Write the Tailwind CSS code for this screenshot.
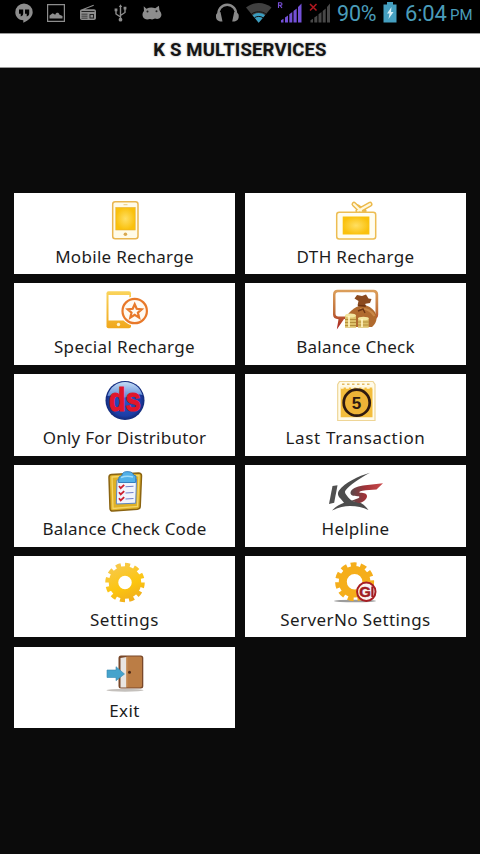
<!DOCTYPE html>
<html lang="en">
  <head>
    <meta charset="utf-8" />
    <meta name="viewport" content="width=device-width, initial-scale=1.0" />
    <title>K S Multiservices</title>
    <script src="https://cdn.jsdelivr.net/npm/@tailwindcss/browser@4"></script>
  </head>

  <body class="bg-[#0b0b0b] font-['Noto_Sans',sans-serif] text-[#1c1c1c]">
    <div class="h-[854px] w-[480px] overflow-hidden">
      <!-- status bar -->
      <div class="flex h-[33px] items-start bg-black">
        <svg class="h-[33px] w-[330px] shrink-0" viewBox="0 0 330 33">
          <g fill="#8d8d8d">
            <path d="M24 3.5a8.7 8.7 0 0 0-8.7 8.7c0 4.6 3.6 8 8 8v2.6c5.500-2.700 9.400-6.300 9.400-10.600A8.700 8.700 0 0 0 24 3.500z" />
            <path fill="#000" d="M19 9.500h4.200v4c0 1.500-1 2.500-2.500 3v-2.700H19zM25 9.500h4.200v4c0 1.500-1 2.500-2.500 3v-2.700H25z" />
            <path d="M47 4h18v18H47zM48.200 5.200v15.600h15.600V5.200z" fill-rule="evenodd" />
            <path d="M49.500 18.500v-3l3.200-2.300 2.500 1.500c1-2.500 3.500-2.500 4.300 0l3 1.300v2.500z" />
            <path d="M82 9.200l11.500-4.500.4 1L85 9.200h9c1.200 0 2 .8 2 2V18c0 1.200-.8 2-2 2H82c-1.200 0-2-.8-2-2v-6.800c0-1.200.8-2 2-2z" />
            <path d="M81.500 11h13v1h-13zM81.500 13.700h6v.8h-6zM81.500 15.700h6v.8h-6zM81.500 17.700h6v.8h-6zM89.500 14h4.500v4.500h-4.500z" fill="#222" />
            <path d="M90.500 15h2.500v2.500h-2.500z" />
            <path d="M143.700 6.200l2.700 2.600c3-1.500 6-1.500 8.800-.5l3.700-2.500.6 4.500c2.400 3 2.400 5.500 1 7-1 1.700-3.500 2-5.500 1.300-1.500 1-3.500 1-5 .4-3 1-6 .3-7-1.900-1-2.500-.5-4.500 1-6z" />
            <circle cx="147.500" cy="11.500" r="1" fill="#222" />
            <circle cx="156.500" cy="11.200" r="1" fill="#222" />
          </g>
          <g fill="none" stroke="#8d8d8d" stroke-width="1.400">
            <path d="M120.500 6v13M120.500 17l-4.500-3v-3.500M120.500 15.500l4.500-3V9" />
            <circle cx="120.500" cy="19.700" r="1.200" fill="#8d8d8d" />
            <path d="M118.800 7l1.700-2.700L122.200 7z" fill="#8d8d8d" stroke="none" />
            <path d="M114.600 8.500h2.800v2.700h-2.800zM123.600 6.800h2.800v2.700h-2.800z" fill="#8d8d8d" stroke="none" />
          </g>
          <!-- headphones -->
          <path d="M218.500 16c-1-6 3-11.300 8.700-11.300S237 10 236 16" fill="none" stroke="#8a8a8a" stroke-width="2.400" />
          <path d="M216 15c0-1.500 2.500-2.800 4.500-3l2 9.500c-3.500.5-6.500-1.500-6.500-4.500zM238.700 15c0-1.500-2.500-2.800-4.500-3l-2 9.500c3.500.5 6.500-1.500 6.500-4.500z" fill="#8a8a8a" />
          <!-- wifi -->
          <path d="M258.700 22.700L246 7.500c7-6 18.400-6 25.500 0z" fill="#404040" />
          <path d="M258.700 22.700l-6.200-7.500c3.500-2.800 9-2.800 12.500 0z" fill="#3a9dc0" />
          <path d="M251.500 14c4-3 10.400-3 14.500 0M254.500 17.700c2.500-1.700 6-1.700 8.500 0" fill="none" stroke="#111" stroke-width="1" />
          <!-- sim signals -->
          <path d="M278.500 8V2.700h2.200c1.700 0 1.700 2.600 0 2.600h-2.200 1.500L282 8" fill="none" stroke="#7a50d8" stroke-width="1.100" />
          <path d="M281 22.500v-2.300l2.500-1.500v3.800zM285 22.500v-5l3-2v7zM289.300 22.500v-8.300l3-2.200v10.500zM293.500 22.500V11l3.200-2.500v14zM298 22.500V7l3.500-3.500v19z" fill="#7350d8" />
          <path d="M310.500 22.500v-2.300l2.500-1.500v3.800zM314.300 22.500v-5l3-2v7zM318.500 22.500v-8.300l3-2.200v10.500zM322.700 22.500V11l3-2.500v14zM327 22.500V7l3-3.500v19z" fill="#484848" />
          <path d="M310 4l6.500 6.500M316.500 4l-6.500 6.500" stroke="#b31820" stroke-width="1.500" />
        </svg>
        <div class="relative w-[150px] font-[Roboto,sans-serif] text-[#4a9cba]">
          <span class="absolute top-[1px] left-[7px] text-[21.500px] leading-[26px] tracking-[-0.2px]">90%</span>
          <svg class="absolute top-[2px] left-[52px] h-[22px] w-[16px]" viewBox="0 0 16 22">
            <path d="M5 0h6v2.500h3.500v18h-13v-18H5z" fill="#459fc0" />
            <path d="M9.500 5L5 11.500h2.500L6.500 17l5-7H9z" fill="#d9f0f8" />
          </svg>
          <span class="absolute top-[1px] left-[75px] text-[22px] leading-[26px] tracking-[-0.2px]">6:04</span>
          <span class="absolute top-[3px] left-[120px] text-[15px] leading-[25px]">PM</span>
        </div>
      </div>

      <!-- title bar -->
      <h1
        class="flex h-[34.500px] items-center justify-center border-y border-[#999] bg-white pt-[2px] font-[Roboto,sans-serif] text-[18.500px] font-bold tracking-[0.17px] text-[#151515] text-shadow-[0_0_2px_#00000066]"
      >
        K S MULTISERVICES
      </h1>

      <!-- menu -->
      <div class="mx-[13.600px] mt-[125.200px] grid grid-cols-2 gap-x-[9.200px] gap-y-[9.300px]">
        <div class="flex h-[81.500px] flex-col items-center bg-white pt-[8px]">
          <svg class="h-[42px] w-[56px] overflow-visible" viewBox="0 0 56 42">
            <defs>
              <radialGradient id="glow">
                <stop offset="0" stop-color="#ffdf62" />
                <stop offset="1" stop-color="#fac10c" />
              </radialGradient>
              <linearGradient id="gold" x2="0" y2="1">
                <stop offset="0" stop-color="#fad45c" />
                <stop offset="1" stop-color="#f0a71c" />
              </linearGradient>
            </defs>
            <rect x="15.700" y=".8" width="25.300" height="37" rx="2.500" fill="#fffbe8" stroke="#e9b650" stroke-width="1.500" />
            <rect x="18.800" y="6.500" width="19.400" height="22.500" fill="url(#glow)" stroke="#e8b030" stroke-width=".6" />
            <path d="M26.500 3.700h4" stroke="#eccb7c" />
            <circle cx="28.400" cy="33.300" r="1.800" fill="#d9a950" />
          </svg>
          <span class="mt-[2px] text-[17px] leading-[23px] whitespace-nowrap tracking-[0.3px]">Mobile Recharge</span>
        </div>

        <div class="flex h-[81.500px] flex-col items-center bg-white pt-[8px]">
          <svg class="h-[42px] w-[56px] overflow-visible" viewBox="0 0 56 42">
            <path d="M33 10L26 3.200M30 10L42 3.200M36 10L30 6" stroke="#ecb94b" stroke-width="5" stroke-linecap="round" />
            <path d="M33 10L26 3.200M30 10L42 3.200" stroke="#fff8dc" stroke-width="2.200" stroke-linecap="round" />
            <rect x="8.700" y="11.200" width="39" height="26.800" rx="2.500" fill="#fffdf0" stroke="#edbd52" stroke-width="1.500" />
            <rect x="14.700" y="15.500" width="26.700" height="18" fill="url(#glow)" />
          </svg>
          <span class="mt-[2px] text-[17px] leading-[23px] whitespace-nowrap tracking-[0.35px]">DTH Recharge</span>
        </div>

        <div class="flex h-[81.500px] flex-col items-center bg-white pt-[8px]">
          <svg class="h-[42px] w-[56px] overflow-visible" viewBox="0 0 56 42">
            <rect x="9.500" y=".2" width="24.500" height="37" rx="2" fill="url(#gold)" />
            <path d="M11.500 4h20.800v25.500H11.500z" fill="#fff" />
            <circle cx="21.500" cy="33.500" r="1.700" fill="#fff4cf" />
            <circle cx="37.700" cy="20" r="14.500" fill="#fff" />
            <circle cx="37.700" cy="20" r="12.200" fill="#fffaf2" stroke="#e8792a" stroke-width="2.200" />
            <path d="M37.700 13.200l2 4.600 5 .5-3.800 3.300 1.200 5-4.400-2.700-4.400 2.700 1.200-5-3.800-3.300 5-.5z" fill="none" stroke="#e8792a" stroke-width="2.200" />
          </svg>
          <span class="mt-[2px] text-[17px] leading-[23px] whitespace-nowrap tracking-[0.35px]">Special Recharge</span>
        </div>

        <div class="flex h-[81.500px] flex-col items-center bg-white pt-[8px]">
          <svg class="h-[42px] w-[56px] overflow-visible" viewBox="0 0 56 42">
            <defs>
              <linearGradient id="bubble" x2="0" y2="1">
                <stop offset="0" stop-color="#dda05c" />
                <stop offset=".55" stop-color="#c0703a" />
                <stop offset="1" stop-color="#a81c1c" />
              </linearGradient>
            </defs>
            <path
              d="M9.500-1.300h36c3 0 4.700 1.700 4.700 4.700v20c0 3-1.700 4.700-4.700 4.700H16L8.800 38.500l1.700-10.300C7 28 5 26.500 5 23.500V3.400C5 .4 6.500-1.300 9.500-1.300zM10 1.200C8.500 1.200 7.500 2 7.500 4v18.500c0 2 1 3 2.800 3H45c1.700 0 2.500-1 2.500-3V4c0-1.800-.8-2.800-2.500-2.800z"
              fill="url(#bubble)"
              fill-rule="evenodd"
            />
            <path d="M31 15c-7 2.500-13 8.500-13 15l1 6h25c3.500-3 5.300-7 4.300-11.500-1-4.500-5-8.500-10-10z" fill="#b06a2e" />
            <path d="M32 18c6-1 12 2 14.500 7" fill="none" stroke="#c98746" stroke-width="2" />
            <path d="M29.500 14.500l1-4.500-4-2.500 2.500-3.500 5 1 4-1.500 2.500 4 3 .5-1.500 4-4.500.8-.5 3z" fill="#8b4a1f" />
            <path d="M30 14.500l8 .5M30 20l5-2 2 4" fill="none" stroke="#6e3513" stroke-width="1.400" />
            <path d="M17 24.500h11v12.200H17zM30 27.500h10.700v9.200H30z" fill="#dcc069" />
            <ellipse cx="22.500" cy="24.500" rx="5.500" ry="2" fill="#f3e6a0" />
            <ellipse cx="35.400" cy="27.500" rx="5.400" ry="1.800" fill="#f3e6a0" />
            <path d="M17 28.500h11M17 31.500h11M17 34.500h11M30 31h10.700M30 34h10.700" stroke="#a98331" stroke-width=".8" />
            <path d="M21 25v11M34 28v8" stroke="#fff4c0" stroke-width="1.700" />
          </svg>
          <span class="mt-[2px] text-[17px] leading-[23px] whitespace-nowrap tracking-[0.25px]">Balance Check</span>
        </div>

        <div class="flex h-[81.500px] flex-col items-center bg-white pt-[8px]">
          <svg class="h-[42px] w-[56px] overflow-visible" viewBox="0 0 56 42">
            <defs>
              <radialGradient id="ball" cx=".5" cy=".5" r=".5">
                <stop offset="0" stop-color="#2a56c8" />
                <stop offset=".8" stop-color="#1c3da5" />
                <stop offset="1" stop-color="#122a78" />
              </radialGradient>
              <linearGradient id="shine" x2="0" y2="1">
                <stop offset="0" stop-color="#c4dcf5" />
                <stop offset="1" stop-color="#5c88d6" />
              </linearGradient>
            </defs>
            <circle cx="28" cy="18.400" r="19.500" fill="url(#ball)" />
            <path d="M10.500 14C13 5 20 0 28 0s15 5 17.500 13c-8-3-13 3-20 2.500-6 0-10-3.500-15-1.500z" fill="url(#shine)" />
            <text x="27.800" y="29" text-anchor="middle" textLength="32" lengthAdjust="spacingAndGlyphs" stroke="#e0152c" stroke-width="1.200" class="fill-[#e0152c] font-['Liberation_Sans',sans-serif] text-[34px] font-bold">ds</text>
          </svg>
          <span class="mt-[2px] text-[17px] leading-[23px] whitespace-nowrap tracking-[0.25px]">Only For Distributor</span>
        </div>

        <div class="flex h-[81.500px] flex-col items-center bg-white pt-[8px]">
          <svg class="h-[42px] w-[56px] overflow-visible" viewBox="0 0 56 42">
            <path d="M11.500-.5h33.500l2 3v36h-37.300V2.500z" fill="#fffbe9" stroke="#eed596" stroke-width="1.200" />
            <path d="M12.700 5.500h31.800v29.800H12.700z" fill="#f3bd3c" />
            <path d="M14 2.200h30" stroke="#e4bb62" stroke-width="1.500" stroke-dasharray="2.500 2.500" />
            <path d="M12.700 5.500h32" stroke="#fff6d8" stroke-width="2.500" stroke-dasharray="3 2.200" />
            <circle cx="28.700" cy="20.700" r="13" fill="#eeb437" stroke="#2e1a10" stroke-width="2.700" />
            <text x="28.600" y="26.700" text-anchor="middle" class="fill-[#2e1a10] font-['Liberation_Sans',sans-serif] text-[17px] font-bold">5</text>
          </svg>
          <span class="mt-[2px] text-[17px] leading-[23px] whitespace-nowrap tracking-[0.65px]">Last Transaction</span>
        </div>

        <div class="flex h-[81.500px] flex-col items-center bg-white pt-[8px]">
          <svg class="h-[42px] w-[56px] overflow-visible" viewBox="0 0 56 42">
            <path d="M14.500 1.500l27-1.500c2 0 3 1 3 2.800l-1.300 30.700c0 1.500-1 2.500-2.800 2.700L16 38c-2 .2-3-1-3-2.800L12 4.300c0-1.700 1-2.700 2.500-2.800z" fill="#dfb127" stroke="#8b6412" stroke-width="1.500" />
            <path d="M15 4l27-1.500-1.500 30.800L16 35.500z" fill="none" stroke="#f5d567" stroke-width="1.300" />
            <path d="M20 7l19.500-1-.8 24.200L19.300 31z" fill="#f1f4fd" stroke="#5c85c2" stroke-width="1" />
            <path d="M21.500 9.500l.5-5.500 3-1.500c.5-3.500 3-4 6-3.800 3.500 0 5 1.300 5.500 3.300l2.500 1-.5 6.500z" fill="#52b0e8" stroke="#2976ba" stroke-width=".9" />
            <path d="M24 4.500c4-1.500 8-1.500 12-.5" fill="none" stroke="#a0dcfa" stroke-width="1.500" />
            <path d="M28.500 13.700l8-.5M28.500 20l8-.5M28.500 26l8-.5" stroke="#7280cc" stroke-width="1.100" />
            <path d="M22 13l1.700 2.200 3.500-3.400M22 19.300l1.700 2.200 3.500-3.400M22 25.300l1.700 2.200 3.500-3.400" fill="none" stroke="#cc2030" stroke-width="1.800" />
          </svg>
          <span class="mt-[2px] text-[17px] leading-[23px] whitespace-nowrap tracking-[0.18px]">Balance Check Code</span>
        </div>

        <div class="flex h-[81.500px] flex-col items-center bg-white pt-[8px]">
          <svg class="h-[42px] w-[56px] overflow-visible" viewBox="0 0 56 42">
            <defs>
              <linearGradient id="ks">
                <stop offset="0" stop-color="#57484a" />
                <stop offset=".45" stop-color="#a03238" />
                <stop offset="1" stop-color="#cc4a4c" />
              </linearGradient>
            </defs>
            <path d="M4.500 13l5-.8-3.300 17.500-5.200 1.300z" fill="#505050" />
            <path d="M42-.3C30 3 17 9.500 11 17.500c-2 3-1 5.500 1.500 8l3.500 4.200c-4 1.300-8.500 4-12 7.800 6-2.700 12-4.500 18-4.500 7 0 13 1.500 18.500 4-3-4-6.500-7-10.500-8.200-4.500.2-7-1-9.500-4-2.500-3-4.500-5-3-7.300C22 11.500 32 5 42-.3z" fill="#4d4d4d" />
            <path d="M55 10.300L35 12.500c-6.500.8-12 3.500-12.500 7-.3 3 3 3.500 7 3.700 3 .2 2 1.500 0 2.300l-6 2.200 7.500 2.500c4-1 7.500-3.500 8-6.700.3-3-3-3.500-6.500-3.700-2-.2-1-1.500 2-2 4-.6 9-1.200 14-1.300z" fill="url(#ks)" />
          </svg>
          <span class="mt-[2px] text-[17px] leading-[23px] whitespace-nowrap tracking-[0.25px]">Helpline</span>
        </div>

        <div class="flex h-[81.500px] flex-col items-center bg-white pt-[8px]">
          <svg class="h-[42px] w-[56px] overflow-visible" viewBox="0 0 56 42">
            <defs>
              <linearGradient id="gear" gradientUnits="userSpaceOnUse" x1="18" y1="0" x2="34" y2="38">
                <stop offset="0" stop-color="#f7c94e" />
                <stop offset=".6" stop-color="#fcc50f" />
                <stop offset="1" stop-color="#f0ad20" />
              </linearGradient>
            </defs>
            <circle cx="28" cy="18.600" r="11.500" fill="none" stroke="url(#gear)" stroke-width="9.500" />
            <circle cx="28" cy="18.600" r="17.500" fill="none" stroke="url(#gear)" stroke-width="4.500" pathLength="24" stroke-dasharray="1.100 .9" />
          </svg>
          <span class="mt-[2px] text-[17px] leading-[23px] whitespace-nowrap tracking-[0.55px]">Settings</span>
        </div>

        <div class="flex h-[81.500px] flex-col items-center bg-white pt-[8px]">
          <svg class="h-[42px] w-[56px] overflow-visible" viewBox="0 0 56 42">
            <ellipse cx="27" cy="37" rx="21" ry="1.300" fill="#9c9c9c" />
            <circle cx="26.600" cy="17.800" r="11.800" fill="none" stroke="#f5ae1b" stroke-width="8" />
            <circle cx="26.600" cy="17.800" r="17" fill="none" stroke="#f5ae1b" stroke-width="5" pathLength="22" stroke-dasharray="1.200 .8" stroke-dashoffset=".3" />
            <circle cx="38.300" cy="27.800" r="9.200" fill="#faf3f1" stroke="#a81e24" stroke-width="2" />
            <text x="37" y="33.300" text-anchor="middle" stroke="#a01c22" stroke-width=".5" class="fill-[#a01c22] font-['Liberation_Sans',sans-serif] text-[15px] font-bold">G</text>
            <path d="M43.300 22.500h2.200v10.500h-2.200z" fill="#a01c22" />
          </svg>
          <span class="mt-[2px] text-[17px] leading-[23px] whitespace-nowrap tracking-[0.4px]">ServerNo Settings</span>
        </div>

        <div class="flex h-[81.500px] flex-col items-center bg-white pt-[8px]">
          <svg class="h-[42px] w-[56px] overflow-visible" viewBox="0 0 56 42">
            <ellipse cx="28" cy="35.300" rx="18.500" ry="1.500" fill="#c4c0bc" />
            <rect x="21.500" y=".5" width="24.800" height="33" rx="2.500" fill="#79482a" />
            <path d="M23.500 3l6-1v30.500h-6z" fill="#e9e5e1" />
            <path d="M29.500 1.500h13.500c1.300 0 2 .7 2 2v27c0 1.300-.7 2-2 2H29.500z" fill="#bb7d45" />
            <path d="M29.800 2v30" stroke="#d19a64" />
            <circle cx="32.500" cy="17.300" r="1.500" fill="#502c18" />
            <path d="M10 15h9v-3.300l8.500 7.300-8.500 6.700v-3.200h-9z" fill="#45a3cc" stroke="#3588b0" stroke-width=".6" />
          </svg>
          <span class="mt-[2px] text-[17px] leading-[23px] whitespace-nowrap tracking-[0.35px]">Exit</span>
        </div>
      </div>
    </div>
  </body>
</html>
